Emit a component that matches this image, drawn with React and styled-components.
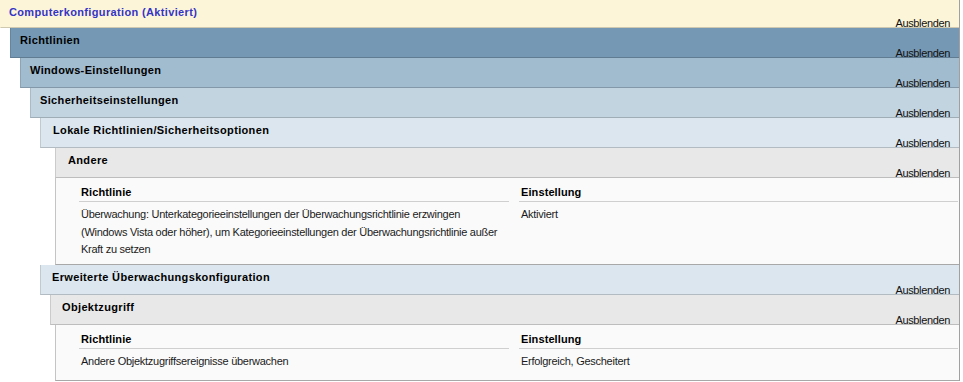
import styled, { createGlobalStyle } from 'styled-components'

const GlobalStyle = createGlobalStyle`
  html, body {
    margin: 0;
    padding: 0;
    background: #ffffff;
  }
  body {
    font-family: "Liberation Sans", Arial, sans-serif;
    font-size: 11px;
    color: #000;
  }
`

const Report = styled.div`
  width: 959px;
  border-right: 1px solid #a0a0a0;
  overflow: hidden;
`

const Bar = styled.div`
  display: flex;
  justify-content: space-between;
  height: ${p => p.$h || 29}px;
  margin-left: ${p => p.$indent}px;
  padding: 0 9px 0 ${p => p.$pad || 9}px;
  background: ${p => p.$bg};
  border-left: 1px solid ${p => p.$indent ? 'rgba(0, 0, 0, 0.12)' : 'transparent'};
  border-bottom: 1px solid rgba(0, 0, 0, 0.18);
  box-sizing: content-box;
`

const Title = styled.span`
  align-self: flex-start;
  padding-top: 5px;
  line-height: 14px;
  font-weight: bold;
  font-size: 11px;
  letter-spacing: 0.35px;
  color: ${p => p.$color || '#000'};
  white-space: nowrap;
`

const Toggle = styled.span`
  align-self: flex-end;
  line-height: 12px;
  margin-bottom: -2px;
  font-size: 11px;
  letter-spacing: -0.35px;
  color: #111;
  cursor: pointer;
`

const Table = styled.div`
  display: grid;
  grid-template-columns: 430px 1fr;
  column-gap: 10px;
  margin-left: ${p => p.$indent}px;
  padding: 6px 1px ${p => p.$bottom}px 23px;
  background: #fafafa;
  border-left: 1px solid #c4c4c4;
  border-bottom: 1px solid #a8a8a8;
`

const Head = styled.div`
  height: 17px;
  line-height: 17px;
  padding-left: 2px;
  font-weight: bold;
  font-size: 11px;
  letter-spacing: 0.1px;
  border-bottom: 1px solid #cfcfcf;
`

const Cell = styled.div`
  padding: 4px 0 0 2px;
  line-height: 17.5px;
  font-size: 11px;
  letter-spacing: -0.27px;
  color: #1a1a1a;
`

function Section({ title, indent, bg, pad, h, color }) {
  return (
    <Bar $indent={indent} $bg={bg} $pad={pad} $h={h}>
      <Title $color={color}>{title}</Title>
      <Toggle>Ausblenden</Toggle>
    </Bar>
  )
}

function PolicyTable({ indent, bottom, rows }) {
  return (
    <Table $indent={indent} $bottom={bottom}>
      <Head>Richtlinie</Head>
      <Head>Einstellung</Head>
      {rows.map(([policy, setting]) => [
        <Cell key={policy}>{policy}</Cell>,
        <Cell key={policy + '-s'}>{setting}</Cell>,
      ])}
    </Table>
  )
}

export default function App() {
  return (
    <>
      <GlobalStyle />
      <Report>
        <Section title="Computerkonfiguration (Aktiviert)" indent={0} bg="#fdf5d7" pad={8} h={27} color="#3434c8" />
        <Section title="Richtlinien" indent={10} bg="#7598b4" />
        <Section title="Windows-Einstellungen" indent={20} bg="#a1bbcf" />
        <Section title="Sicherheitseinstellungen" indent={30} bg="#c3d4e1" />
        <Section title="Lokale Richtlinien/Sicherheitsoptionen" indent={40} bg="#dbe6ee" pad={12} />
        <Section title="Andere" indent={55} bg="#e8e8e8" pad={12} />
        <PolicyTable
          indent={55}
          bottom={5}
          rows={[
            [
              'Überwachung: Unterkategorieeinstellungen der Überwachungsrichtlinie erzwingen (Windows Vista oder höher), um Kategorieeinstellungen der Überwachungsrichtlinie außer Kraft zu setzen',
              'Aktiviert',
            ],
          ]}
        />
        <Section title="Erweiterte Überwachungskonfiguration" indent={40} bg="#dbe6ee" pad={11} />
        <Section title="Objektzugriff" indent={50} bg="#e8e8e8" pad={11} />
        <PolicyTable
          indent={55}
          bottom={10}
          rows={[['Andere Objektzugriffsereignisse überwachen', 'Erfolgreich, Gescheitert']]}
        />
      </Report>
    </>
  )
}
